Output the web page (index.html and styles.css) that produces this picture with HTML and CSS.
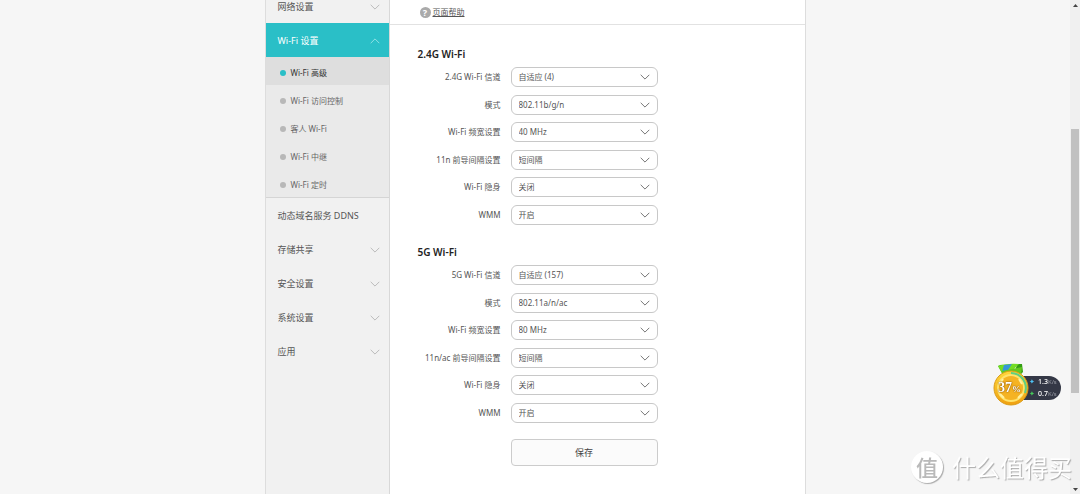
FILE: index.html
```html
<!DOCTYPE html>
<html lang="zh-CN">
<head>
<meta charset="utf-8">
<title>Wi-Fi 高级</title>
<link rel="stylesheet" href="styles.css">
</head>
<body>
<svg class="defs" aria-hidden="true"><symbol id="down" viewBox="0 0 10 6"><path d="M.7.8 5 5.1 9.3.8" fill="none" stroke="currentColor"/></symbol></svg>
<div class="page">
  <nav class="sidebar">
    <a class="item first" href="#">网络设置<svg class="chev"><use href="#down"/></svg></a>
    <a class="item active" href="#">Wi-Fi 设置<svg class="chev up"><use href="#down"/></svg></a>
    <div class="submenu">
      <a class="sub current" href="#">Wi-Fi 高级</a>
      <a class="sub" href="#">Wi-Fi 访问控制</a>
      <a class="sub" href="#">客人 Wi-Fi</a>
      <a class="sub" href="#">Wi-Fi 中继</a>
      <a class="sub" href="#">Wi-Fi 定时</a>
    </div>
    <a class="item" href="#">动态域名服务 DDNS</a>
    <a class="item" href="#">存储共享<svg class="chev"><use href="#down"/></svg></a>
    <a class="item" href="#">安全设置<svg class="chev"><use href="#down"/></svg></a>
    <a class="item" href="#">系统设置<svg class="chev"><use href="#down"/></svg></a>
    <a class="item" href="#">应用<svg class="chev"><use href="#down"/></svg></a>
  </nav>
  <main class="content">
    <div class="help"><span class="mark">?</span><a href="#">页面帮助</a></div>
    <form class="form">
      <h2>2.4G Wi-Fi</h2>
      <div class="rows">
        <div class="row"><label for="a1">2.4G Wi-Fi 信道</label><span class="pick"><select id="a1"><option>自适应 (4)</option></select><svg class="chev"><use href="#down"/></svg></span></div>
        <div class="row"><label for="a2">模式</label><span class="pick"><select id="a2"><option>802.11b/g/n</option></select><svg class="chev"><use href="#down"/></svg></span></div>
        <div class="row"><label for="a3">Wi-Fi 频宽设置</label><span class="pick"><select id="a3"><option>40 MHz</option></select><svg class="chev"><use href="#down"/></svg></span></div>
        <div class="row"><label for="a4">11n 前导间隔设置</label><span class="pick"><select id="a4"><option>短间隔</option></select><svg class="chev"><use href="#down"/></svg></span></div>
        <div class="row"><label for="a5">Wi-Fi 隐身</label><span class="pick"><select id="a5"><option>关闭</option></select><svg class="chev"><use href="#down"/></svg></span></div>
        <div class="row"><label for="a6">WMM</label><span class="pick"><select id="a6"><option>开启</option></select><svg class="chev"><use href="#down"/></svg></span></div>
      </div>
      <h2>5G Wi-Fi</h2>
      <div class="rows">
        <div class="row"><label for="b1">5G Wi-Fi 信道</label><span class="pick"><select id="b1"><option>自适应 (157)</option></select><svg class="chev"><use href="#down"/></svg></span></div>
        <div class="row"><label for="b2">模式</label><span class="pick"><select id="b2"><option>802.11a/n/ac</option></select><svg class="chev"><use href="#down"/></svg></span></div>
        <div class="row"><label for="b3">Wi-Fi 频宽设置</label><span class="pick"><select id="b3"><option>80 MHz</option></select><svg class="chev"><use href="#down"/></svg></span></div>
        <div class="row"><label for="b4">11n/ac 前导间隔设置</label><span class="pick"><select id="b4"><option>短间隔</option></select><svg class="chev"><use href="#down"/></svg></span></div>
        <div class="row"><label for="b5">Wi-Fi 隐身</label><span class="pick"><select id="b5"><option>关闭</option></select><svg class="chev"><use href="#down"/></svg></span></div>
        <div class="row"><label for="b6">WMM</label><span class="pick"><select id="b6"><option>开启</option></select><svg class="chev"><use href="#down"/></svg></span></div>
      </div>
      <button class="save" type="button">保存</button>
    </form>
  </main>
</div>
<div class="scrollbar" aria-hidden="true">
  <svg class="tip" viewBox="0 0 5 3"><path d="M0 3 2.5 0 5 3z"/></svg>
  <div class="track"><div class="thumb"></div></div>
  <svg class="tip" viewBox="0 0 5 3"><path d="M0 0 2.5 3 5 0z"/></svg>
</div>
<div class="meter">
  <svg class="medal" viewBox="0 0 36 44">
    <defs>
      <linearGradient id="gold" x2="0" y2="1"><stop offset="0" stop-color="#ffd83a"/><stop offset="1" stop-color="#f0a010"/></linearGradient>
    </defs>
    <path d="M5 3Q8 1 12 2L14 12H10z" fill="#3fb81a"/>
    <path d="M24 1h5l1 8-4 4h-5z" fill="#349d14"/>
    <path d="M5 3Q14 0 26 1L20 7 9 10z" fill="#74dc24"/>
    <path d="M11 2 19 1 15 7 9 9z" fill="#3597d8"/>
    <path d="M9 8 29 4 28 12H10z" fill="#62c91e"/>
    <circle cx="18" cy="25" r="17" fill="url(#gold)" stroke="#d99a16"/>
    <circle cx="18" cy="25" r="13" fill="#f5b323" stroke="#ffe36b" stroke-width="2"/>
    <path d="M18 10A15 15 0 0 1 32 30" fill="none" stroke="#5fcf83" stroke-width="2"/>
    <path d="M10 16 7 21M11 35 7 31M26 16 29 21M25 35 29 31" stroke="#fff0a0" stroke-width="2"/>
  </svg>
  <span class="pct">37<small>%</small></span>
  <div class="speeds">
    <span><i class="up-dot">✦</i><b>1.3</b><small>K/s</small></span>
    <span><i class="down-dot">✦</i><b>0.7</b><small>K/s</small></span>
  </div>
</div>
<div class="brand"><span class="seal">值</span><span>什么值得买</span></div>
</body>
</html>
```
FILE: styles.css
```css
* { box-sizing: border-box; }
body {
  margin: 0;
  height: 100vh;
  display: flex;
  overflow: hidden;
  background: #f6f6f6;
  color: #555;
  font: 9px/12px "Noto Sans", "Noto Sans CJK SC", sans-serif;
}
a { color: inherit; text-decoration: none; }
.defs { position: absolute; width: 0; height: 0; }
.page {
  width: 100%;
  max-width: 541px;
  margin: 0 auto;
  min-height: 100%;
  display: flex;
  border: solid #ddd;
  border-width: 0 1px;
  background: #fff;
}
.sidebar {
  width: 124px;
  flex: none;
  background: #f1f1f1;
  border-right: 1px solid #d8d8d8;
}
.item {
  height: 34px;
  padding: 2px 9px 0 12px;
  display: flex;
  align-items: center;
  justify-content: space-between;
}
.first { margin-top: -11px; }
.active { background: #2abfc7; color: #fff; }
.chev { width: 10px; height: 6px; color: #bbb; display: block; }
.up { transform: rotate(180deg); color: #8ee0e4; }
.submenu {
  background: #eaeaea;
  border-bottom: 1px solid #d5d5d5;
}
.sub {
  height: 28px;
  padding: 4px 0 0 14px;
  display: flex;
  align-items: center;
  gap: 5px;
  font-size: 8px;
  color: #666;
}
.sub::before {
  content: "";
  width: 6px;
  height: 6px;
  border-radius: 50%;
  background: #b8b8b8;
}
.current { background: #dedede; color: #333; }
.current::before { background: #2abfc7; }
.content { flex: 1; }
.help {
  height: 25px;
  padding-left: 30px;
  display: flex;
  align-items: center;
  gap: 2px;
  border-bottom: 1px solid #e2e2e2;
  font-size: 8px;
}
.help a { text-decoration: underline; }
.mark {
  width: 11px;
  height: 11px;
  border-radius: 50%;
  background: #aaa;
  color: #fff;
  font: bold 9px/11px "Noto Sans", sans-serif;
  text-align: center;
}
.form { padding: 22px 28px 0; }
h2 { margin: 0 0 6px; font-size: 10px; font-weight: 600; line-height: 14px; color: #222; }
.rows {
  height: 158px;
  margin-bottom: 20px;
  display: flex;
  flex-direction: column;
  justify-content: space-between;
}
.row { display: flex; align-items: center; gap: 10px; font-size: 8px; }
.row label { width: 83px; text-align: right; white-space: nowrap; }
.pick { position: relative; width: 147px; }
.pick .chev { position: absolute; right: 8px; top: 7px; color: #777; pointer-events: none; }
select {
  appearance: none;
  display: block;
  width: 100%;
  height: 20px;
  padding: 0 7px;
  border: 1px solid #c8c8c8;
  border-radius: 6px;
  background: #fff;
  color: #555;
  font: inherit;
}
.save {
  display: block;
  width: 147px;
  height: 27px;
  margin: -4px 0 0 93px;
  border: 1px solid #ccc;
  border-radius: 4px;
  background: #fbfbfb;
  color: #444;
  font: inherit;
}
.scrollbar {
  width: 10px;
  flex: none;
  padding: 4px 1px 3px;
  background: #f0f0f0;
  display: flex;
  flex-direction: column;
  align-items: center;
}
.tip { width: 5px; height: 3px; fill: #444; }
.track { flex: 1; width: 100%; padding-top: 122px; }
.thumb { height: 264px; background: #c1c1c1; }
.meter { position: fixed; right: 18px; top: 363px; width: 69px; height: 44px; }
.medal { position: absolute; left: 0; top: 0; z-index: 1; width: 36px; height: 44px; }
.pct {
  position: absolute;
  left: 5px;
  top: 17px;
  z-index: 2;
  color: #fff;
  font: bold 14px/16px "Liberation Serif", serif;
  text-shadow: 0 0 1px #8a5200, 0 0 2px #8a5200;
}
.pct small { font-size: 9px; }
.speeds {
  position: absolute;
  left: 18px;
  right: 1px;
  top: 13px;
  height: 24px;
  padding-left: 18px;
  border-radius: 12px;
  background: #343846;
  color: #fff;
  font-size: 7px;
}
.speeds span { display: flex; align-items: center; height: 12px; }
.speeds i { width: 9px; font-size: 7px; font-style: normal; }
.speeds b { font-weight: 500; }
.speeds small { font-size: 6px; color: #9a9da6; }
.up-dot { color: #4ec3f5; }
.down-dot { color: #46c95a; }
.brand {
  position: fixed;
  right: 8px;
  bottom: 11px;
  display: flex;
  align-items: center;
  gap: 9px;
  color: #fff;
  font: 24px/32px "Noto Sans CJK SC", sans-serif;
  text-shadow: 1px 1px 1px #aaa;
}
.seal {
  width: 32px;
  height: 32px;
  border-radius: 50%;
  background: #fff;
  color: #b9b9b9;
  box-shadow: 1px 1px 1px #aaa;
  font-size: 22px;
  line-height: 30px;
  font-weight: 500;
  text-align: center;
  text-shadow: none;
}
```
